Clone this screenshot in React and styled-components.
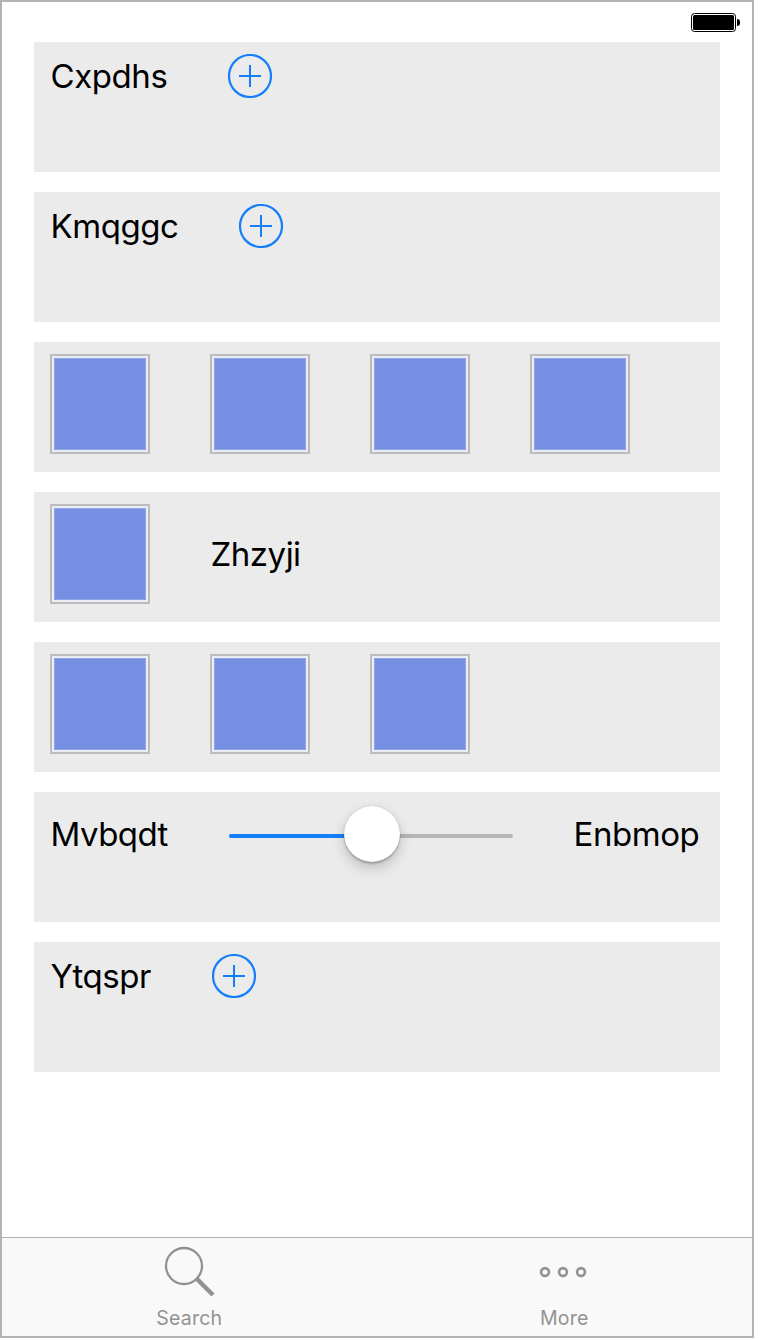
import React from "react";
import styled, { createGlobalStyle } from "styled-components";

const GlobalStyle = createGlobalStyle`
  *, *::before, *::after { box-sizing: border-box; }
  body { margin: 0; background: #fff; font-family: Inter, "Liberation Sans", sans-serif; }
`;

const Screen = styled.div`
  width: 754px;
  height: 1338px;
  border: 2px solid #b3b3b3;
  background: #fff;
  display: flex;
  flex-direction: column;
`;

const StatusBar = styled.header`
  height: 40px;
  flex: none;
  display: flex;
  justify-content: flex-end;
  align-items: flex-start;
  padding: 11px 12px 0 0;
`;

const Battery = styled.div`
  display: flex;
  align-items: center;
  gap: 1px;
`;

const BatteryCase = styled.div`
  width: 45px;
  height: 19px;
  padding: 1px;
  border: 1px solid #000;
  border-radius: 3.5px;
  background: #fff;
`;

const BatteryCharge = styled.div`
  height: 100%;
  border-radius: 1.5px;
  background: #000;
`;

const BatteryTip = styled.div`
  width: 3px;
  height: 7px;
  border-radius: 0 3px 3px 0;
  background: #000;
`;

const Content = styled.main`
  flex: 1;
  display: flex;
  flex-direction: column;
  gap: 20px;
  padding: 0 32px;
`;

const Panel = styled.section`
  height: 130px;
  padding: 12px 16px;
  background: #ebebeb;
`;

const Line = styled.div`
  display: flex;
  align-items: center;
  gap: 60px;
`;

const Label = styled.span`
  flex: none;
  width: ${(p) => p.$width}px;
  padding-left: 0.6px;
  font-size: 33px;
  line-height: 44px;
  letter-spacing: ${(p) => p.$tracking}px;
  white-space: nowrap;
  color: #000;
`;

const AddButton = styled.button`
  width: 44px;
  height: 44px;
  padding: 0;
  border: 0;
  background: none;
  svg { display: block; }
`;

const Swatch = styled.div`
  width: 100px;
  height: 100px;
  padding: 1px;
  border: 2px solid #bcbcbc;
  background: #e9ebef;

  &::before {
    content: "";
    display: block;
    height: 100%;
    border: 1px solid #edf0fa;
    background: #778fe2;
    box-shadow: inset 0 0 0 1px #8fa3e7;
  }
`;

const Slider = styled.div`
  width: 284px;
  height: 60px;
  display: flex;
  align-items: center;
  padding-top: 4px;
`;

const Track = styled.div`
  position: relative;
  width: 100%;
  height: 4px;
  border-radius: 2px;
  background: #b6b6b6;
`;

const Fill = styled.div`
  width: 50%;
  height: 100%;
  border-radius: 2px 0 0 2px;
  background: #147efb;
`;

const Thumb = styled.div`
  position: absolute;
  left: 115px;
  top: -28px;
  width: 56px;
  height: 56px;
  border-radius: 50%;
  background: #fff;
  box-shadow: 0 0 1px rgba(0, 0, 0, 0.3), 0 2px 2px rgba(0, 0, 0, 0.2), 0 6px 14px rgba(0, 0, 0, 0.2);
`;

const TabBar = styled.nav`
  height: 99px;
  flex: none;
  display: flex;
  justify-content: space-between;
  padding: 0 113px 0 112px;
  border-top: 1px solid #b2b2b2;
  background: #f9f9f9;
`;

const Tab = styled.div`
  width: 150px;
  display: flex;
  flex-direction: column;
  align-items: center;
  padding-top: 7px;
  color: #929292;
  svg { display: block; }
`;

const TabLabel = styled.span`
  margin-top: 7px;
  padding-left: 0.5px;
  font-size: 19.5px;
  line-height: 28px;
  letter-spacing: ${(p) => p.$tracking}px;
`;

function Add() {
  return (
    <AddButton aria-label="Add">
      <svg width="44" height="44" viewBox="0 0 44 44" fill="none" stroke="#147efb" strokeWidth="2">
        <circle cx="22" cy="22" r="21" strokeWidth="2.2" />
        <path d="M11 22H33M22 11V33" />
      </svg>
    </AddButton>
  );
}

function AddPanel({ text, width, tracking }) {
  return (
    <Panel>
      <Line>
        <Label $width={width} $tracking={tracking}>{text}</Label>
        <Add />
      </Line>
    </Panel>
  );
}

function SwatchPanel({ count, children }) {
  return (
    <Panel>
      <Line>
        {Array.from({ length: count }, (_, i) => <Swatch key={i} />)}
        {children}
      </Line>
    </Panel>
  );
}

export default function App() {
  return (
    <>
      <GlobalStyle />
      <Screen>
        <StatusBar>
          <Battery>
            <BatteryCase><BatteryCharge /></BatteryCase>
            <BatteryTip />
          </Battery>
        </StatusBar>
        <Content>
          <AddPanel text="Cxpdhs" width={118} tracking={-0.45} />
          <AddPanel text="Kmqggc" width={129} tracking={-0.45} />
          <SwatchPanel count={4} />
          <SwatchPanel count={1}>
            <Label $width={92} $tracking={-0.5}>Zhzyji</Label>
          </SwatchPanel>
          <SwatchPanel count={3} />
          <Panel>
            <Line>
              <Label $width={119} $tracking={-0.55}>Mvbqdt</Label>
              <Slider>
                <Track><Fill /><Thumb /></Track>
              </Slider>
              <Label $width={131} $tracking={-0.45}>Enbmop</Label>
            </Line>
          </Panel>
          <AddPanel text="Ytqspr" width={102} tracking={-0.45} />
        </Content>
        <TabBar>
          <Tab>
            <svg width="52" height="52" viewBox="0 0 52 52" fill="none" stroke="currentColor">
              <circle cx="21" cy="21" r="18" strokeWidth="2.3" />
              <path d="M33 33L50 50" strokeWidth="4.5" />
            </svg>
            <TabLabel $tracking={0.25}>Search</TabLabel>
          </Tab>
          <Tab>
            <svg width="52" height="52" viewBox="0 0 52 52" fill="none" stroke="currentColor" strokeWidth="2.6">
              <circle cx="7" cy="27" r="3.9" />
              <circle cx="25" cy="27" r="3.9" />
              <circle cx="43" cy="27" r="3.9" />
            </svg>
            <TabLabel $tracking={0.25}>More</TabLabel>
          </Tab>
        </TabBar>
      </Screen>
    </>
  );
}
